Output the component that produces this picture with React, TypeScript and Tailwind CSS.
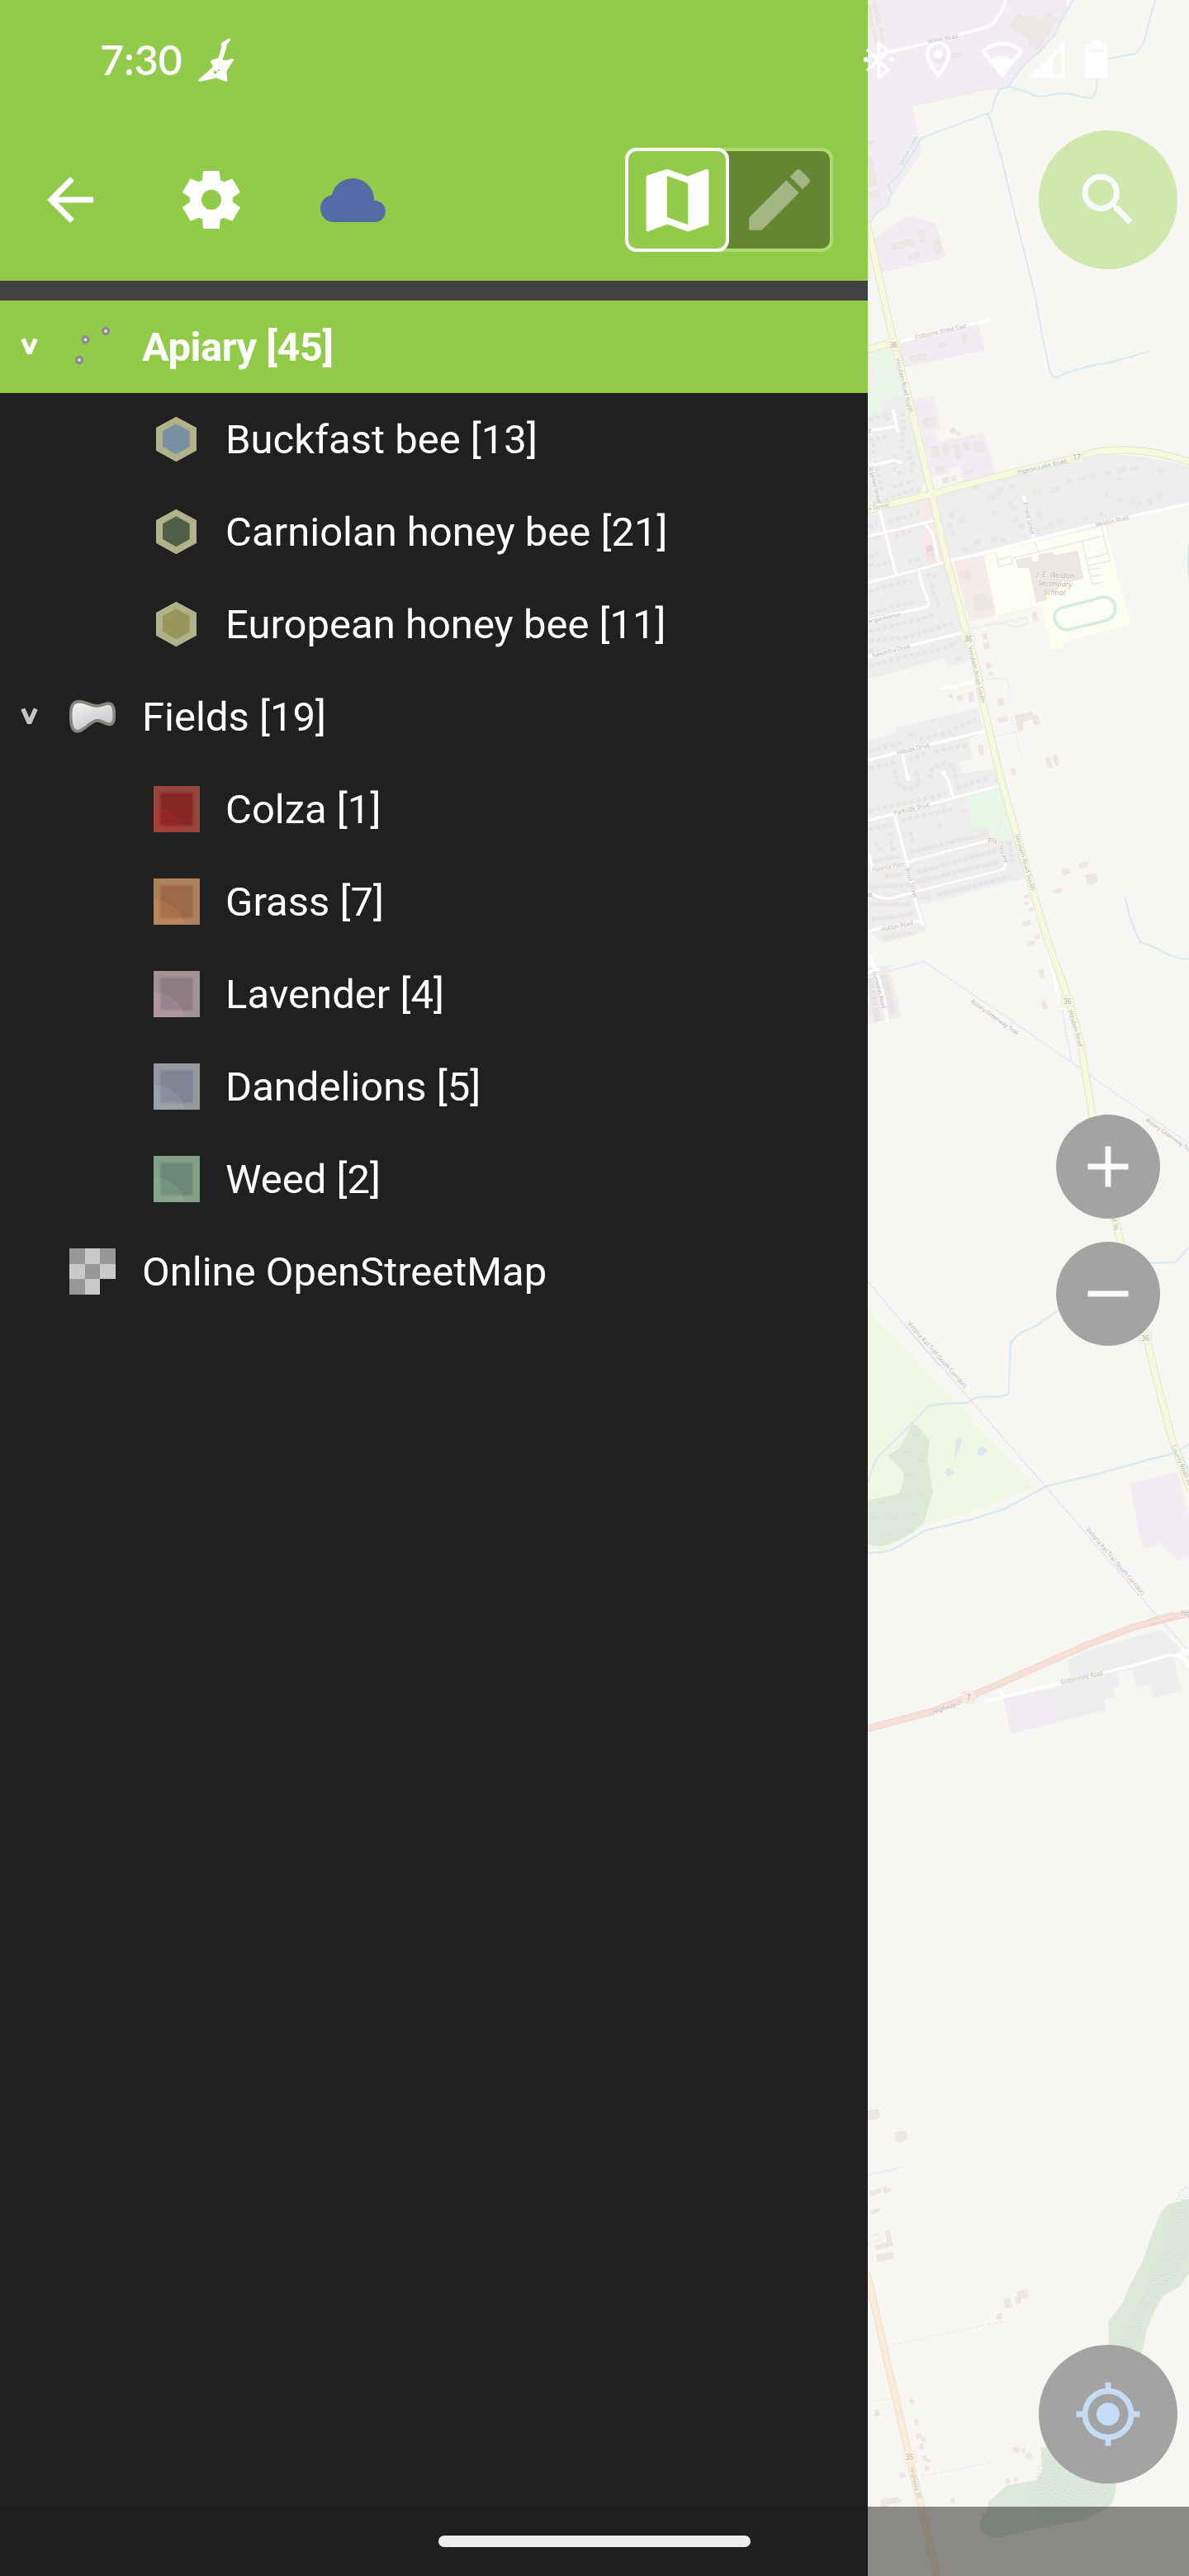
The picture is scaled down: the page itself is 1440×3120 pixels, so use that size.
import React from "react";
import { MdAdd, MdArrowBack, MdEdit, MdMap, MdMyLocation, MdRemove, MdSearch } from "react-icons/md";

type Swatch = { edge: string; edgeLit: string; core: string; coreLit: string };

const HALO = { paintOrder: "stroke" as const, stroke: "#ffffff", strokeWidth: 4, strokeOpacity: 0.6 };

function MapLabel({ x, y, r, size = 21, fill = "#b2b2b0", italic = false, children, len }: {
  x: number; y: number; r: number; size?: number; fill?: string; italic?: boolean; children: string; len?: number;
}) {
  return (
    <text
      transform={`translate(${x} ${y}) rotate(${r})`}
      fontSize={size}
      fill={fill}
      fontStyle={italic ? "italic" : "normal"}
      textLength={len}
      lengthAdjust="spacingAndGlyphs"
      {...HALO}
    >
      {children}
    </text>
  );
}

function Shield({ x, y, n, fill = "#f4f4e4", ink = "#b4b4a0" }: { x: number; y: number; n: string; fill?: string; ink?: string }) {
  return (
    <g>
      <rect x={x - 8} y={y - 7} width="16" height="14" rx="1.5" fill={fill} stroke="#e9e9d6" strokeWidth="0.6" />
      <text x={x} y={y + 3} textAnchor="middle" fontSize="8.5" fill={ink}>{n}</text>
    </g>
  );
}

/* Small building footprints: x, y, width, height */
function Houses({ items, r = -14 }: { items: number[][]; r?: number }) {
  return (
    <g fill="#ece8e5" stroke="#e5e0dc" strokeWidth="1.5">
      {items.map(([x, y, w, h], i) => (
        <rect key={i} x={x - w / 2} y={y - h / 2} width={w} height={h} transform={`rotate(${r} ${x} ${y})`} />
      ))}
    </g>
  );
}

function MapCanvas() {
  return (
    <svg
      className="block h-full w-full"
      viewBox="1051 0 389 3120"
      fontFamily='"Noto Sans", sans-serif'
      fill="none"
      strokeLinejoin="round"
    >
      <defs>
        <pattern id="marsh" width="46" height="30" patternUnits="userSpaceOnUse">
          <path d="M2 4h16M26 8h12M8 14h14M32 17h12M0 23h10M18 26h16" stroke="#c3dcf2" strokeWidth="2.2" />
        </pattern>
      </defs>
      <rect x="1051" width="389" height="3120" fill="#f7f6f2" />

      {/* north: industrial area and creeks */}
      <g transform="translate(1040 0) scale(.33333)">
        <path d="M33 0H750L755 30L710 130L650 190L600 240L545 308L190 387L227 550L120 710L33 815Z" fill="#f2edf3" stroke="#ece6ec" strokeWidth="2" />
        <path d="M55 872L180 785L277 815L315 932L80 990Z" fill="#f2edf3" stroke="#ece6ec" strokeWidth="2" />
        <path d="M150 1250L430 1180L455 1270L165 1333Z" fill="#f2edf3" stroke="#ece6ec" strokeWidth="2" />
        <path d="M33 1280L115 1262L165 1425L85 1452V1490L33 1505Z" fill="#e9f7e9" />
        <path d="M33 1285L70 1390L33 1405Z" fill="#f2edf3" />
        <g fill="#ece8e5" stroke="#e5e0dc" strokeWidth="2">
          <path d="M577 50L612 68L627 53L657 70L693 45L722 67L652 182L614 160L623 143L548 98Z" />
          <path d="M50 12L62 10L79 85L67 90ZM33 20L42 20L53 93L43 96ZM50 110L60 107L70 155L60 158ZM72 103L84 101L94 152L84 156Z" />
          <path d="M33 570L44 570L67 670L33 680ZM42 700L72 697L76 714L64 722L42 716ZM33 517L57 512L60 520L33 526Z" />
          <path d="M122 886L196 868L204 888L128 908ZM215 836L234 834L242 876L224 880ZM269 878L290 875L301 918L282 925ZM198 920L222 915L224 930L206 941ZM180 928L190 925L193 942L183 946ZM337 195L369 190L372 206L340 213ZM277 205L310 205V223H280Z" />
          <path d="M184 1298L242 1285L246 1303L187 1314ZM291 1248L316 1245L320 1260L296 1264ZM374 1222L391 1217L397 1242L379 1247Z" />
        </g>
        <path d="M70 575L95 665L85 690L33 695" stroke="#eceaf0" strokeWidth="3" strokeDasharray="4 4" />
        <path d="M33 205L120 187L250 157L360 127L450 103Q490 92 500 70Q530 30 532 0" stroke="#fff" strokeWidth="10" />
        <path d="M150 1240L475 1163" stroke="#fff" strokeWidth="10" strokeLinecap="round" />
        <g stroke="#d9e9f0" strokeWidth="6">
          <path d="M780 0L735 75L710 130L652 192L600 237L543 315L512 325Q495 350 485 400Q480 412 465 413L230 500L150 632L108 668L118 700L105 745L65 775L33 818" />
          <path d="M1077 0L1060 60L1040 140Q1025 180 1005 195L905 213Q880 240 865 285Q868 340 845 357L800 350L780 342L730 339L670 351L640 348L605 332L543 315" />
          <path d="M465 413Q480 430 485 460L520 580L565 770L605 930L640 1070L665 1210L690 1330Q700 1368 712 1372L760 1353L850 1327L910 1318L1055 1277" />
        </g>
      </g>

      {/* town centre and school */}
      <g transform="translate(1040 450) scale(.33333)">
        <path d="M85 105L165 78L200 200L240 400L225 440L265 450L320 690L400 945V1055L325 1070L313 1040L33 1120V155L85 140Z" fill="#eeeeee" />
        <path d="M280 450L560 378L770 330L900 302Q1000 295 1200 345V480L900 560L640 610L335 690Z" fill="#eeeeee" />
        <path d="M195 105L272 87L300 205L228 225ZM230 225L275 215L283 255L455 222L497 372L380 405L365 345L330 350V372L265 382Z" fill="#f2edf3" />
        <path d="M218 475L258 462L278 535L235 540ZM225 600L245 590V555L280 550L315 690L245 700ZM345 690L405 675L425 775L370 785Z" fill="#f8e9e6" />
        <path d="M405 675L455 668L500 885L400 908L372 790L425 775Z" fill="#f4ebeb" />
        <path d="M455 672L500 650L895 562L990 920L745 985L743 1005L700 1012L662 850L500 885Z" fill="#fdfdf2" stroke="#f8f8e2" strokeWidth="2" />
        <path d="M572 685L625 673L632 692L655 690V665L705 658L708 670L795 652L815 750L750 770V760L725 763V790L680 800L682 828L645 838L620 712H578Z" fill="#ece7e5" stroke="#e5e0dc" strokeWidth="2" />
        <path d="M415 815L450 803L463 825L485 828V862L425 868Z" fill="#ece6e3" />
        <path d="M242 637L268 630L272 650L248 660Z" fill="#e5d3e8" />
        <path d="M248 662L272 655L277 680L250 683Z" fill="#ebe5e2" />
        <Houses items={[[257, 182, 42, 28], [278, 290, 24, 34], [315, 285, 20, 40], [360, 290, 20, 50], [391, 273, 20, 30], [437, 272, 32, 38], [297, 355, 26, 18], [402, 365, 28, 14], [318, 395, 20, 20], [345, 388, 16, 16], [342, 215, 20, 16], [362, 226, 10, 10], [378, 738, 12, 36], [398, 736, 14, 34]]} />
        <Houses items={[[484, 457, 24, 20], [505, 438, 14, 20], [521, 430, 12, 14], [556, 418, 16, 10], [647, 438, 30, 18], [712, 430, 30, 16], [765, 397, 22, 12], [810, 389, 28, 12], [850, 379, 22, 12], [904, 368, 20, 14], [957, 356, 28, 14], [1001, 353, 26, 10], [1100, 360, 20, 16], [947, 391, 12, 12], [901, 446, 10, 14], [949, 466, 14, 18], [994, 474, 22, 14], [1020, 480, 12, 12], [1060, 472, 16, 18], [1095, 450, 20, 18], [656, 518, 18, 24], [553, 480, 18, 16], [568, 497, 20, 12], [492, 518, 16, 20], [572, 540, 14, 12], [592, 562, 16, 20], [729, 545, 22, 16], [700, 560, 14, 24], [678, 569, 14, 12], [652, 580, 12, 20], [824, 535, 18, 12], [880, 518, 16, 12], [335, 520, 12, 22], [375, 542, 14, 14], [332, 558, 16, 20], [342, 585, 14, 14], [388, 645, 26, 14], [430, 620, 22, 14], [492, 610, 18, 20], [525, 612, 22, 10], [425, 422, 26, 12], [640, 890, 14, 34], [458, 963, 14, 20], [465, 997, 18, 20], [472, 1068, 16, 20], [479, 1097, 10, 10], [361, 1043, 16, 14]]} />
        <g stroke="#e9e5e2" strokeWidth="14">
          <path d="M40 175L110 155M40 250L100 238M105 180L110 150M160 150L165 215L155 290" strokeDasharray="15 9" />
          <path d="M50 260L55 310M60 325L75 380L85 440M130 300L125 350L165 380M180 285L195 340L190 370M50 480L180 435L230 430M125 420L200 395" strokeDasharray="14 10" />
          <path d="M38 565L65 550M110 545L225 510M38 605L75 595M130 600L200 575M180 690L225 680M40 675L75 660M38 705L120 695" strokeDasharray="16 9" />
          <path d="M245 738L285 742M265 770L290 855M38 800L100 780L190 760M38 880L120 855L210 835M38 945L160 915L270 885M38 980L180 965L340 915M38 1015L100 1010M38 1070L190 1030L300 1010L355 985" strokeDasharray="17 8" />
        </g>
        <g stroke="#fff" strokeWidth="10" strokeLinecap="round">
          <path d="M33 215L135 200M125 142L142 218M45 340L130 323L152 330M33 600L280 540M75 500L135 735M33 768L220 720L320 690L470 655L640 610L860 555L1200 480M600 455L637 610M218 720Q225 770 255 840Q258 850 245 855L33 905M33 1035L190 995L390 945M240 555Q270 580 275 620L290 690" />
        </g>
        <path d="M290 462L620 608M33 608L275 548M33 775L330 695" stroke="#f8dedc" strokeWidth="3" strokeDasharray="7 5" />
        <g stroke="#ededf0" strokeWidth="6">
          <path d="M497 655L510 710L560 695L550 670L505 687M560 678L885 598M882 565L912 688L835 705M812 618L848 772L888 766M640 620L650 650M832 680L908 660M838 720L880 714M842 745L884 738" />
          <path d="M405 935L510 912L570 928L610 918Q620 900 605 893L510 915" />
        </g>
        <path d="M750 855L885 820Q915 815 930 845Q940 885 905 903L760 938Q735 942 715 912Q705 880 725 865Q735 857 750 855Z" stroke="#d3eee1" strokeWidth="11" />
        <path d="M1203 620Q1190 680 1203 760" stroke="#d9e9f0" strokeWidth="7" />
      </g>

      {/* southern suburb */}
      <g transform="translate(1040 800) scale(.33333)">
        <path d="M33 290L135 262V245L435 172L455 260L400 285L412 355L365 370L375 410L490 392L515 450L565 640L608 790L225 890L248 985L85 1030L33 970Z" fill="#eeeeee" />
        <path d="M390 495L515 465L567 645L520 655L480 640L470 605L415 608Z" fill="#e9f7e9" />
        <path d="M568 200L628 187L636 205L645 197L660 228L640 234L632 212L596 222L595 252L580 257Z" fill="#ece8e5" stroke="#e5e0dc" strokeWidth="2" />
        <path d="M398 118L417 115L420 148L402 152Z" fill="#ece4ee" />
        <Houses items={[[516, 150, 20, 26], [524, 214, 34, 14], [444, 325, 16, 34], [563, 404, 14, 22], [691, 371, 16, 38], [718, 364, 14, 36], [754, 767, 24, 18], [818, 743, 32, 18], [847, 793, 36, 32], [722, 837, 26, 12], [609, 858, 14, 10], [608, 882, 12, 8], [626, 904, 14, 10], [611, 954, 26, 16], [648, 1005, 16, 12], [626, 1028, 26, 12], [334, 130, 12, 14], [367, 136, 18, 16], [270, 219, 10, 10], [385, 547, 14, 12], [293, 600, 10, 14]]} />
        <g stroke="#e9e5e2" strokeWidth="15">
          <path d="M38 330L160 297M180 272L210 268M220 285L340 258M345 250L425 212M40 393L140 370M180 360L240 340M275 330L400 305" strokeDasharray="17 9" />
          <path d="M130 395L140 445L180 470L220 450L210 395M262 430L262 400L300 375L340 380L355 440M355 462L475 425M38 545L320 485M155 580L340 540M38 612L120 595M112 625L125 690M190 620L195 670M60 660L80 690" strokeDasharray="17 8" />
          <path d="M185 697L470 630M210 770L500 690M210 803L510 733M285 852L550 785M50 730L150 710M95 785L165 775M38 825L190 815M40 885L190 885M45 942L200 920M90 1008L200 990M225 862L262 857M548 655L560 730" strokeDasharray="18 4" />
        </g>
        <g stroke="#fff" strokeWidth="10" strokeLinecap="round">
          <path d="M33 362L140 335L260 305L455 257M160 345L178 427M308 408L325 435L342 490M33 582L128 557L260 522L515 455M130 560L175 730L205 870L232 960M180 732L470 655Q510 650 520 680L533 740Q535 757 510 765L210 840L110 865Q80 865 50 850M40 710L50 765L165 740M48 980L225 945M305 103L420 77" />
          <path d="M680 1030L720 1200" strokeWidth="7" />
        </g>
        <circle cx="178" cy="427" r="9" fill="#fff" />
        <circle cx="308" cy="408" r="9" fill="#fff" />
        <path d="M420 77L500 65Q540 62 545 85L550 138M490 278L570 258M553 205L595 365" stroke="#ecebee" strokeWidth="4" />
        <path d="M33 590L130 566L260 530L510 462M465 490Q520 550 515 590L503 640M140 560L225 885M205 845L545 760L520 650M205 725L500 655M48 862Q110 885 205 850" stroke="#f8dedc" strokeWidth="3" strokeDasharray="7 5" />
        <path d="M967 860L985 930Q1000 980 1025 1025L1070 1040L1140 1075Q1170 1088 1200 1083" stroke="#d9e9f0" strokeWidth="6" />
      </g>

      <g transform="translate(1040 1150) scale(.33333)">
        <path d="M33 65L108 57L158 242L33 272Z" fill="#eeeeee" />
        <path d="M92 92L125 235M42 105L70 260" stroke="#e8e3e0" strokeWidth="24" strokeDasharray="18 3" />
        <path d="M42 25L60 75L85 150L103 262M33 85L70 72" stroke="#fff" strokeWidth="12" strokeLinecap="round" />
        <path d="M33 95L108 80M90 190L100 262" stroke="#f8dedc" strokeWidth="3" strokeDasharray="7 5" />
        <Houses items={[[674, 202, 14, 30], [665, 88, 16, 30]]} />
        <path d="M685 0L738 215" stroke="#fff" strokeWidth="8" />
        <path d="M115 78L235 43L550 255L770 408L900 500L1200 705M740 222L755 310L772 405M33 1207L290 1510" stroke="#cfcff8" strokeWidth="4" strokeDasharray="4 5" />
        <path d="M1200 1083L1150 1137L1060 1139M725 1310L645 1367L590 1393Q552 1420 551 1445V1500" stroke="#d9e9f0" strokeWidth="6" />
      </g>

      {/* golf course, woods and highway */}
      <g transform="translate(1040 1600) scale(.33333 .38265)">
        <path d="M33 -45L75 0L645 528L400 605L245 645L100 722H33Z" fill="#f0f7e5" />
        <path d="M33 567L140 548Q165 530 165 480L105 425Q150 410 165 375L195 325L220 335L256 378L250 440L270 540L235 640Q160 700 75 713L33 708Z" fill="#dde8d8" />
        <path d="M352 375L368 370L375 380L348 440L350 400ZM430 405L448 395L466 408L448 430L432 422ZM310 478L328 463L348 480L330 493Z" fill="#dce8ee" />
        <path d="M985 515L1158 477L1200 620V748L1158 757L1103 707L1030 720Z" fill="#f2edf3" />
        <path d="M755 1072L840 1040L1100 977L1170 1040L1143 1065L1173 1170L1070 1195L1058 1150L1010 1158L998 1105L935 1110L948 1155L925 1165L930 1188L893 1197L900 1230L715 1270L690 1168L772 1140Z" fill="#eeeeee" />
        <path d="M527 1195L690 1168L715 1270L557 1303Z" fill="#f2edf3" stroke="#ebe6ec" strokeWidth="2" />
        <g stroke="#d9e9f0" strokeWidth="6">
          <path d="M33 515Q50 450 75 425L170 345L255 268Q330 258 390 260L430 241L515 239L545 232L551 60" />
          <path d="M33 733Q100 738 150 710L245 662L400 630L530 595L680 523L840 490L1000 452L1145 418L1200 390M1165 410L1200 475" />
        </g>
        <path d="M155 0L400 245L680 525L1090 940L1200 1045" stroke="#cfcff8" strokeWidth="4" strokeDasharray="4 5" />
        <g stroke="#fff" strokeWidth="9" strokeLinecap="round">
          <path d="M463 1203L540 1187L700 1153L1000 1090L1130 1057L1165 1058L1200 1040M500 1163L530 1187M1165 1058L1205 1094" />
        </g>
        <path d="M33 1290L270 1235L400 1190L520 1145L700 1075L830 1025L1000 968L1200 925" stroke="#ecd2ca" strokeWidth="22" />
        <path d="M33 1290L270 1235L400 1190L520 1145L700 1075L830 1025L1000 968L1200 925" stroke="#f5dfd7" strokeWidth="18" />
        <path d="M1055 943L1145 921M1060 962L1150 940" stroke="#cfc5c0" strokeWidth="2" />
        <g fill="#cbd8c6" fontSize="20">
          {[[190, 366], [155, 420], [210, 444], [165, 492], [145, 553], [215, 553], [68, 578], [33, 626], [112, 626], [176, 613], [82, 680], [165, 670]].map(([x, y]) => (
            <text key={`${x}-${y}`} x={x} y={y}>♤♤</text>
          ))}
        </g>
      </g>

      {/* southern marsh and farm lots */}
      <g transform="translate(1040 2500) scale(.33333 .3954)">
        <path d="M1200 413L1125 430Q1095 450 1080 490Q1060 530 1030 610Q980 680 960 730L907 790L910 870L905 1150L660 1175L668 1240L645 1275L540 1290L472 1340L468 1365Q435 1390 443 1425Q460 1455 520 1448L640 1425L830 1395L910 1355Q940 1330 935 1270L1030 880L1045 820Q1070 760 1105 712L1170 680L1200 640Z" fill="#dde8d8" />
        <path d="M1200 370L1165 385L1140 440L1110 540L1060 650L1010 750L950 840L940 900L1010 870L1040 760L1110 690L1170 620L1200 560ZM700 1190L645 1240L632 1330L650 1390L700 1410L910 1355L935 1280Z" fill="url(#marsh)" />
        <g fill="#ece8e5" stroke="#e5e0dc" strokeWidth="2">
          <path d="M33 143L70 138L76 164L33 172ZM132 210L172 205L175 232L137 239ZM43 390L78 383L80 393L46 402ZM89 380L100 374L104 382L114 381V389L94 394ZM46 448L75 442L74 452L48 457ZM97 512L112 510L122 556L64 568L61 557L104 547ZM66 584L122 577L127 594L69 604Z" />
          <path d="M576 697L610 690L614 714L583 720ZM528 722L548 717L555 742L534 748ZM570 715L586 713L588 730L573 734ZM501 768L518 764L520 780L504 783ZM56 1062L70 1058L77 1074L62 1079ZM80 1336L140 1328L151 1335L148 1342L106 1347V1356H84ZM149 1253L164 1250L168 1262L153 1267ZM334 1332L347 1330L349 1342L337 1345Z" />
          <path d="M562 1176L580 1172L584 1186L565 1190ZM605 1200L618 1190L632 1200L620 1213ZM532 1272L547 1269L551 1281L536 1285ZM566 1269L576 1267L578 1277L568 1280ZM590 1180L600 1178L606 1186L596 1190Z" />
          <path d="M184 1027L196 1025L202 1038L190 1041ZM202 1090L214 1088L217 1105L206 1108ZM208 1134L224 1131L228 1144L212 1147ZM221 1166L233 1163L236 1177L225 1180ZM231 1202L244 1199L248 1212L235 1215ZM240 1233L251 1230L255 1243L244 1246ZM229 1146L238 1144L242 1154L233 1156ZM246 1212L256 1210L260 1217L250 1220Z" />
        </g>
        <path d="M33 340L170 313" stroke="#edecec" strokeWidth="5" />
        <path d="M40 528L72 520L77 540L42 545M50 560L33 550" stroke="#ecebee" strokeWidth="4" />
        <path d="M100 864L525 788M40 1036L120 1022M228 1262L495 1217" stroke="#ece8e8" strokeWidth="3" strokeDasharray="14 8" />
        <path d="M30 640L60 750L100 900L150 1080L185 1210L225 1350L285 1568" stroke="#eddfc8" strokeWidth="26" />
        <path d="M30 640L60 750L100 900L150 1080L185 1210L225 1350L285 1568" stroke="#f8ecda" strokeWidth="21" />
      </g>

      {/* county roads */}
      {[{ c: "#e2e5c6", w: 9 }, { c: "#f7f9df", w: 7.2 }].map(({ c, w }) => (
        <g key={c} stroke={c} strokeWidth={w}>
          <path d="M1050 270L1055 293L1065 337L1080 405L1092 450L1105 500L1128 597L1147 680L1168 757L1183 810L1190 850L1212 943L1232 1013L1257 1100L1270 1143L1287 1190L1293 1207L1308 1260L1323 1352L1350 1477L1357 1503L1388 1617L1400 1669L1420 1745L1442 1806" />
          <path d="M1051 617.500L1090 608L1128 598.500L1167 587.500L1237 570L1293 557L1327 547.500Q1350 544 1367 545Q1407 547 1442 560M1051 423.500L1079 415" />
        </g>
      ))}

      {/* place names */}
      <g transform="translate(1040 0) scale(.33333)">
        <MapLabel x={253} y={160} r={-12} len={110}>Walsh Road</MapLabel>
        <MapLabel x={155} y={606} r={-60} len={125} fill="#b5cfdc" italic>Sinister Creek</MapLabel>
        <MapLabel x={206} y={1232} r={-12.500} len={190}>Colborne Street East</MapLabel>
        <MapLabel x={134} y={1303} r={76} len={205}>Verulam Road North</MapLabel>
      </g>
      <g transform="translate(1040 450) scale(.33333)">
        <MapLabel x={578} y={374} r={-13.500} len={184} fill="#b1b29e">Pigeon Lake Road</MapLabel>
        <MapLabel x={862} y={564} r={-13} len={122}>Weldon Road</MapLabel>
        <MapLabel x={598} y={478} r={77} len={118}>Ernest Street</MapLabel>
        <MapLabel x={36} y={345} r={77} len={138}>St James Street</MapLabel>
        <MapLabel x={35} y={508} r={-12} len={78}>n Street</MapLabel>
        <text x="34" y="222" fontSize="20" fill="#b2b2b0">e</text>
        <MapLabel x={35} y={915} r={-13} len={120}>Angus Avenue</MapLabel>
        <MapLabel x={52} y={1038} r={-14} len={140}>Kawartha Drive</MapLabel>
        <MapLabel x={398} y={1000} r={77} len={210}>Verulam Road South</MapLabel>
        <g fill="#bdb9a4" fontSize="27" fontStyle="italic" textAnchor="middle" {...HALO}>
          <text transform="translate(714 749) rotate(3)">J. E. Weldon</text>
          <text transform="translate(713 780) rotate(3)">Secondary</text>
          <text transform="translate(710 811) rotate(3)">School</text>
        </g>
      </g>
      <g transform="translate(1040 800) scale(.33333)">
        <MapLabel x={140} y={343} r={-14} len={122}>Hillside Drive</MapLabel>
        <MapLabel x={130} y={562} r={-14} len={132}>Parkside Drive</MapLabel>
        <MapLabel x={50} y={770} r={-12} len={120}>Florence Place</MapLabel>
        <MapLabel x={170} y={755} r={75} len={112}>Brock Street</MapLabel>
        <MapLabel x={84} y={983} r={-12} len={116}>Hutton Road</MapLabel>
        <MapLabel x={468} y={660} r={4} len={34}>Ella</MapLabel>
        <MapLabel x={505} y={660} r={73} len={80}>Crescent</MapLabel>
        <MapLabel x={568} y={633} r={74} len={212}>Verulam Road South</MapLabel>
        <text x="34" y="858" fontSize="20" fill="#b2b2b0">st</text>
      </g>
      <g transform="translate(1040 1150) scale(.33333)">
        <MapLabel x={50} y={82} r={75} len={138}>Gunsolus Road</MapLabel>
        <MapLabel x={406} y={192} r={35.500} len={205}>Rotary Greenway Trail</MapLabel>
        <MapLabel x={1042} y={624} r={35} len={205}>Rotary Greenway Trail</MapLabel>
        <MapLabel x={762} y={220} r={74} len={140}>Verulam Road</MapLabel>
        <MapLabel x={920} y={978} r={77} len={45}>d 36</MapLabel>
      </g>
      <g transform="translate(1040 1600) scale(.33333 .38265)">
        <MapLabel x={176} y={10} r={44.500} len={290}>Victoria Rail Trail (South Corridor)</MapLabel>
        <MapLabel x={826} y={662} r={45.500} len={290}>Victoria Rail Trail (South Corridor)</MapLabel>
        <MapLabel x={1136} y={396} r={64} len={140}>County Road 36</MapLabel>
        <MapLabel x={272} y={1244} r={-17} len={104} fill="#bdada8">Highway 7</MapLabel>
        <MapLabel x={735} y={1150} r={-11} len={156}>Goldenmile Road</MapLabel>
        <MapLabel x={1172} y={933} r={0} len={95} fill="#bdada8">Highway 7</MapLabel>
      </g>
      <g transform="translate(1040 2500) scale(.33333 .3954)">
        <MapLabel x={186} y={1236} r={74} len={100} size={19} fill="#bdb3a3">Highway 35</MapLabel>
      </g>
      <Shield x={1082} y={417.500} n="36" />
      <Shield x={1304} y={554} n="17" />
      <Shield x={1172.500} y={774} n="36" />
      <Shield x={1292.500} y={1212.500} n="36" />
      <Shield x={1387} y={1620.500} n="36" />
      <Shield x={1173} y={2056} n="7" fill="#f8e8e2" ink="#c3a9a0" />
      <Shield x={1101.500} y={2976} n="35" fill="#f8f1e6" ink="#bfb4a3" />
    </svg>
  );
}

function StatusBar() {
  return (
    <div className="absolute inset-x-0 top-0 flex h-[144px] items-center justify-between pl-[121px] pr-[98px] text-white">
      <div className="flex items-center">
        <span className="w-[99px] whitespace-nowrap font-['Lato'] text-[50px] font-semibold leading-none">7:30</span>
        <svg className="ml-[20px] h-[53px] w-[43px]" viewBox="697 141 125 159" preserveAspectRatio="none" fill="#fff">
          <path
            fillRule="evenodd"
            d="M806 142Q810 141 810 150L796 168Q798 176 794 184L783 219Q790 226 817 216Q824 216 821 223L797 262L800 296Q798 301 794 299L760 286L703 300Q695 299 699 292L748 247Q750 240 740 228Q739 223 745 221L768 213L780 170Q774 166 780 158ZM757 257L759 262L765 263L761 267L762 272L757 270L752 272L753 267L749 263L755 262ZM766 256H772V261H766Z"
          />
        </svg>
      </div>
      <svg className="h-[46px] w-[296px]" viewBox="20 148 888 138" fill="#fff">
        <circle cx="28" cy="218" r="9" />
        <circle cx="121" cy="218" r="9" />
        <path d="M32 180L108 256L75 281V157L108 188L32 258" fill="none" stroke="#fff" strokeWidth="11" />
        <path fillRule="evenodd" d="M291 152C265 152 245 171 245 198C245 230 291 283 291 283S336 230 336 198C336 171 316 152 291 152ZM291 164C310 164 324 178 324 198C324 220 291 264 291 264S258 220 258 198C258 178 272 164 291 164Z" />
        <circle cx="291" cy="198" r="16" />
        <path fillRule="evenodd" d="M445 186Q523 117 602 186L523 284ZM463 188L487 217Q523 190 560 217L584 188Q523 142 463 188Z" />
        <path fillRule="evenodd" d="M749 153V285H617ZM736 186L708 214V270H736Z" />
        <path d="M849 148H882V162H898Q906 162 906 170V276Q906 284 898 284H833Q825 284 825 276V170Q825 162 833 162H849Z" />
        <path d="M839 177H892V189H839Z" fill="#f7f6f2" />
      </svg>
    </div>
  );
}

function Header() {
  return (
    <header className="flex h-[340px] items-end bg-[#92cb49] pb-[35px] pl-[43px] pr-[42px]">
      <div className="flex h-[126px] flex-1 items-center text-white">
        <MdArrowBack size={84} />
        <svg className="ml-[94px] h-[70px] w-[70px]" viewBox="641 621 204 210" preserveAspectRatio="none" fill="#fff">
          <path
            fillRule="evenodd"
            d="M714 621H771L775 655L788 661L817 649L845 698L819 718V734L845 754L817 803L788 791L775 796L771 831H714L711 796L698 791L669 803L641 754L667 734V718L641 698L669 649L698 661L711 655ZM743 689A35 36.500 0 1 0 743 762A35 36.500 0 1 0 743 689Z"
          />
        </svg>
        <svg className="ml-[97px] h-[53px] w-[79px]" viewBox="1127 647 229 157" preserveAspectRatio="none">
          <path
            fill="#546ca6"
            d="M1174 804C1148 804 1127 783 1127 756C1127 729 1145 710 1167 707C1174 673 1204 647 1241 647C1283 647 1316 681 1316 726C1338 726 1356 743 1356 765C1356 787 1338 804 1318 804Z"
          />
        </svg>
      </div>
      <div className="flex h-[126px] w-[252px] rounded-[14px] bg-[#aed973] bg-clip-border">
        <div className="z-10 flex w-[126px] shrink-0 items-center justify-center rounded-[14px] border-4 border-white bg-[#92cb49] text-white">
          <MdMap size={101} className="shrink-0" />
        </div>
        <div className="my-1 -ml-[14px] mr-1 flex flex-1 items-center justify-center rounded-r-[10px] bg-[#648532] pl-[14px] text-[#a2b583]">
          <MdEdit size={98} className="shrink-0" />
        </div>
      </div>
    </header>
  );
}

function Chevron({ color }: { color: string }) {
  return (
    <svg className="h-[22px] w-[21px]" viewBox="0 0 21 22" fill="none" stroke={color} strokeWidth="5.500" strokeLinejoin="bevel">
      <path d="M2.800 1.500L10.500 19L18.200 1.500" />
    </svg>
  );
}

function PointsIcon() {
  return (
    <svg className="h-14 w-14" viewBox="0 0 56 56">
      {[[12, 44], [19.500, 19.500], [44, 9]].map(([x, y]) => (
        <circle key={x} cx={x} cy={y} r="3.500" fill="#f2f2f2" stroke="#8d8d8d" strokeWidth="3.400" />
      ))}
    </svg>
  );
}

function FieldsIcon() {
  return (
    <svg className="h-14 w-14" viewBox="252 1074 168 168">
      <defs>
        <linearGradient id="fieldFill" x1="0" y1="0" x2="0.600" y2="1">
          <stop offset="0" stopColor="#f6f6f6" />
          <stop offset="1" stopColor="#c6c6c6" />
        </linearGradient>
      </defs>
      <path
        fill="url(#fieldFill)"
        stroke="#858680"
        strokeWidth="11"
        d="M257 1160C256 1120 262 1103 290 1103C315 1105 330 1119 352 1119C372 1119 380 1110 395 1110C412 1110 415 1130 415 1150C415 1175 410 1187 398 1186C380 1184 370 1172 352 1172C335 1172 315 1197 292 1209C265 1218 258 1195 257 1160Z"
      />
    </svg>
  );
}

function TilesIcon() {
  return (
    <div className="grid h-14 w-14 grid-cols-3 grid-rows-3">
      {["a", "b", "a", "b", "a", "b", "a", "b", "c"].map((k, i) => (
        <span key={i} className={k === "a" ? "bg-[#979797]" : k === "b" ? "bg-[#c9c9c9]" : ""} />
      ))}
    </div>
  );
}

function HexIcon({ fill }: { fill: string }) {
  return (
    <svg className="h-14 w-14" viewBox="558 73 168 168">
      <path fill="#b0b38a" d="M640 75L714 115V198L640 239L567 198V115Z" />
      <path fill={fill} d="M640 101L689 128V184L640 212L591 184V128Z" />
    </svg>
  );
}

function SwatchIcon({ id, s }: { id: string; s: Swatch }) {
  return (
    <svg className="h-14 w-14" viewBox="0 0 56 56">
      <defs>
        <clipPath id={id}>
          <circle cx="0" cy="65" r="39" />
        </clipPath>
        <filter id={`${id}-soft`}>
          <feGaussianBlur stdDeviation="0.900" />
        </filter>
      </defs>
      <rect width="56" height="56" fill={s.edge} />
      <rect x="8" y="8" width="39.500" height="40" fill={s.core} filter={`url(#${id}-soft)`} />
      <g clipPath={`url(#${id})`}>
        <rect width="56" height="56" fill={s.edgeLit} />
        <rect x="8" y="8" width="39.500" height="40" fill={s.coreLit} filter={`url(#${id}-soft)`} />
      </g>
    </svg>
  );
}

function Group({ icon, label, chevron, active = false }: { icon: React.ReactNode; label: string; chevron?: string; active?: boolean }) {
  return (
    <div className={`flex h-28 items-center ${active ? "bg-[#92cb49] font-bold" : ""}`}>
      <div className="ml-[25px] mr-[38px] w-[21px]">{chevron && <Chevron color={chevron} />}</div>
      {icon}
      <span className={`ml-8 whitespace-nowrap ${active ? "tracking-[-0.55px]" : ""}`}>{label}</span>
    </div>
  );
}

function Item({ icon, label }: { icon: React.ReactNode; label: string }) {
  return (
    <div className="flex h-28 items-center pl-[186px]">
      {icon}
      <span className="ml-[31px] whitespace-nowrap">{label}</span>
    </div>
  );
}

const bees = [
  { label: "Buckfast bee [13]", fill: "#7a8ea4" },
  { label: "Carniolan honey bee [21]", fill: "#525f47" },
  { label: "European honey bee [11]", fill: "#98965b" },
];

const fields: { label: string; s: Swatch }[] = [
  { label: "Colza [1]", s: { edge: "#98453d", edgeLit: "#a43f39", core: "#852724", coreLit: "#932725" } },
  { label: "Grass [7]", s: { edge: "#ac815d", edgeLit: "#b9855d", core: "#9c6948", coreLit: "#ab7049" } },
  { label: "Lavender [4]", s: { edge: "#a39293", edgeLit: "#ae989b", core: "#8e7b83", coreLit: "#9a8390" } },
  { label: "Dandelions [5]", s: { edge: "#969a9e", edgeLit: "#9ca0aa", core: "#808495", coreLit: "#8a8ea0" } },
  { label: "Weed [2]", s: { edge: "#869f87", edgeLit: "#88a68d", core: "#6c8878", coreLit: "#729380" } },
];

function LayerTree() {
  return (
    <nav className="flex flex-col border-t-[24px] border-[#424242] font-['Roboto'] text-[49px] leading-none text-white">
      <Group icon={<PointsIcon />} label="Apiary [45]" chevron="#ffffff" active />
      {bees.map((b) => (
        <Item key={b.label} icon={<HexIcon fill={b.fill} />} label={b.label} />
      ))}
      <Group icon={<FieldsIcon />} label="Fields [19]" chevron="#c4c4c4" />
      {fields.map((f, i) => (
        <Item key={f.label} icon={<SwatchIcon id={`field-${i}`} s={f.s} />} label={f.label} />
      ))}
      <Group icon={<TilesIcon />} label="Online OpenStreetMap" />
    </nav>
  );
}

function MapButtons() {
  return (
    <div className="absolute right-[14px] top-[158px] flex h-[2850px] w-[168px] flex-col items-center">
      <button className="flex h-[168px] w-[168px] items-center justify-center rounded-full bg-[#d0e8ae] text-[#f8fbfd]">
        <MdSearch size={84} />
      </button>
      <button className="mt-[1024px] flex h-[126px] w-[126px] items-center justify-center rounded-full bg-[#a3a3a3] text-[#fafafa]">
        <MdAdd size={84} />
      </button>
      <button className="mt-7 flex h-[126px] w-[126px] items-center justify-center rounded-full bg-[#a3a3a3] text-[#fafafa]">
        <MdRemove size={84} />
      </button>
      <button className="mt-auto flex h-[168px] w-[168px] items-center justify-center rounded-full bg-[#a3a3a3] text-[#c5dcf4]">
        <MdMyLocation size={84} />
      </button>
    </div>
  );
}

export default function App() {
  return (
    <div className="relative flex h-[3120px] w-[1440px] overflow-hidden bg-[#f7f6f2]">
      <aside className="flex w-[1051px] shrink-0 flex-col bg-[#202020]">
        <Header />
        <LayerTree />
      </aside>
      <main className="relative flex-1">
        <MapCanvas />
        <MapButtons />
      </main>
      <StatusBar />
      <div className="absolute inset-x-0 bottom-0 flex h-[84px] items-center justify-center bg-[#1e1b18]/50">
        <div className="h-[14px] w-[378px] rounded-full bg-[#ededed]" />
      </div>
    </div>
  );
}
